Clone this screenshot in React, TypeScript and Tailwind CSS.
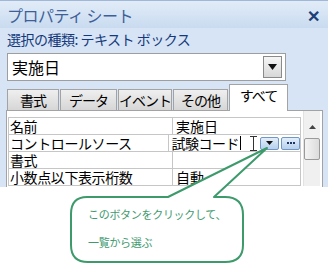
import React from 'react';

const tabs = [
  { label: '書式', w: 'w-[52px]' },
  { label: 'データ', w: 'w-[57px]' },
  { label: 'イベント', w: 'w-[54px]' },
  { label: 'その他', w: 'w-[55px]' },
];

const rows = ['名前', 'コントロールソース', '書式', '小数点以下表示桁数'];

const App: React.FC = () => {
  return (
    <div className="relative w-[328px] h-[269px] bg-white overflow-hidden font-['Noto_Sans_CJK_JP','Noto_Sans',sans-serif] text-black">
      <div className="h-[187px] bg-[#d6e4f5] flex flex-col">
        {/* title bar */}
        <div className="h-[28px] flex items-center justify-between pl-[7px] pr-[8px] bg-gradient-to-b from-[#e2ecf8] to-[#c9dbf0] border-t border-[#9fb8d8]">
          <span className="text-[16px] leading-none text-[#3d6098] tracking-[-0.5px]">プロパティ シート</span>
          <span className="text-[16px] leading-none font-bold text-[#1e3f78]">✕</span>
        </div>
        <div className="h-[22px] flex items-center pl-[7px] text-[14px] text-[#15397a] tracking-[-0.5px]">
          選択の種類: テキスト ボックス
        </div>
        {/* object dropdown */}
        <div className="mt-[3px] ml-[7px] w-[279px] h-[28px] bg-white border border-[#9e9e9e] flex items-center justify-between pl-[4px] pr-[3px]">
          <span className="text-[16px] leading-none">実施日</span>
          <div className="w-[19px] h-[22px] border border-[#8a8a8a] bg-gradient-to-b from-[#f6f6f6] to-[#d8d8d8] flex items-center justify-center">
            <svg width="9" height="6" viewBox="0 0 9 6"><path d="M0 0 L9 0 L4.5 6 Z" fill="#111" /></svg>
          </div>
        </div>
        {/* tabs */}
        <div className="mt-[3px] ml-[7px] h-[26px] flex items-end relative z-10">
          {tabs.map((t) => (
            <div
              key={t.label}
              className={`${t.w} h-[21px] mr-[1px] border border-b-0 border-[#a3a3a3] bg-gradient-to-b from-[#efefef] to-[#d6d6d6] flex items-center justify-center text-[14px] leading-none whitespace-nowrap tracking-[-1px]`}
            >
              {t.label}
            </div>
          ))}
          <div className="w-[59px] h-[27px] mb-[-1px] border border-b-0 border-[#a3a3a3] bg-white flex items-start justify-center pt-[3px] text-[14px] leading-none whitespace-nowrap tracking-[-1px]">
            すべて
          </div>
        </div>
        {/* property panel */}
        <div className="ml-[6px] w-[317px] flex-1 bg-white border border-b-0 border-[#a3a3a3] flex pt-[6px] pl-[1px]">
          <div className="w-[293px] border-l border-t border-[#c6c6c6] self-start">
            {rows.map((r, i) => (
              <div key={r} className="h-[17px] flex border-b border-r border-[#c6c6c6]">
                <div className="w-[164px] border-r border-[#c6c6c6] pl-[1px] flex items-center text-[14px] leading-[14px] whitespace-nowrap tracking-[-0.4px]">
                  {r}
                </div>
                <div className="flex-1 flex items-center pl-[3px] text-[14px] leading-[14px] whitespace-nowrap">
                  {i === 0 && '実施日'}
                  {i === 1 && (
                    <>
                      <span className="tracking-[-0.5px]">試験コード</span>
                      <span className="w-[1px] h-[14px] bg-black ml-[1px]" />
                      <svg className="ml-[9px]" width="7" height="15" viewBox="0 0 7 15">
                        <path d="M0 0.5 H7 M3.5 0.5 V14.5 M0 14.5 H7" stroke="#333" strokeWidth="1" fill="none" />
                      </svg>
                      <div className="ml-[3px] w-[19px] h-[13px] rounded-[2px] border border-[#6f98c4] bg-gradient-to-b from-[#e3eefa] to-[#b6d0ec] flex items-center justify-center">
                        <svg width="7" height="4" viewBox="0 0 7 4"><path d="M0 0 L7 0 L3.5 4 Z" fill="#111" /></svg>
                      </div>
                      <div className="ml-[2px] w-[19px] h-[13px] rounded-[2px] border border-[#6f98c4] bg-gradient-to-b from-[#e3eefa] to-[#b6d0ec] flex items-center justify-center gap-[1px]">
                        <span className="w-[2px] h-[2px] bg-[#1b3566]" />
                        <span className="w-[2px] h-[2px] bg-[#1b3566]" />
                        <span className="w-[2px] h-[2px] bg-[#1b3566]" />
                      </div>
                    </>
                  )}
                  {i === 3 && '自動'}
                </div>
              </div>
            ))}
          </div>
          {/* scrollbar */}
          <div className="ml-[2px] w-[17px] h-[75px] mt-[-6px] bg-[#f0f0f0] border-l border-[#e2e2e2] flex flex-col items-center">
            <svg className="mt-[14px]" width="7" height="4" viewBox="0 0 7 4"><path d="M0 4 L7 4 L3.5 0 Z" fill="#444" /></svg>
            <div className="mt-[9px] w-[16px] h-[22px] rounded-[2px] border border-[#9a9a9a] bg-gradient-to-r from-[#f4f4f4] to-[#dcdcdc]" />
          </div>
        </div>
      </div>

      {/* callout */}
      <div className="absolute left-0 top-0 w-[328px] h-[269px] pointer-events-none">
        <svg className="absolute left-0 top-0" width="328" height="269" viewBox="0 0 328 269">
          <path
            d="M87 197 L168 197 L267 148 L214 197 L225 197 Q243 197 243 215 L243 245 Q243 262 225 262 L88 262 Q71 262 71 245 L71 214 Q71 197 87 197 Z"
            fill="white"
            stroke="#3d9a6b"
            strokeWidth="2"
            strokeLinejoin="round"
          />
        </svg>
        <div className="absolute left-[88px] top-[207px] text-[11px] leading-[14px] text-[#3f9a70] tracking-[-0.3px] whitespace-nowrap">
          このボタンをクリックして、
        </div>
        <div className="absolute left-[88px] top-[235px] text-[11px] leading-[14px] text-[#3f9a70] tracking-[-0.3px] whitespace-nowrap">
          一覧から選ぶ
        </div>
      </div>
    </div>
  );
};

export default App;
